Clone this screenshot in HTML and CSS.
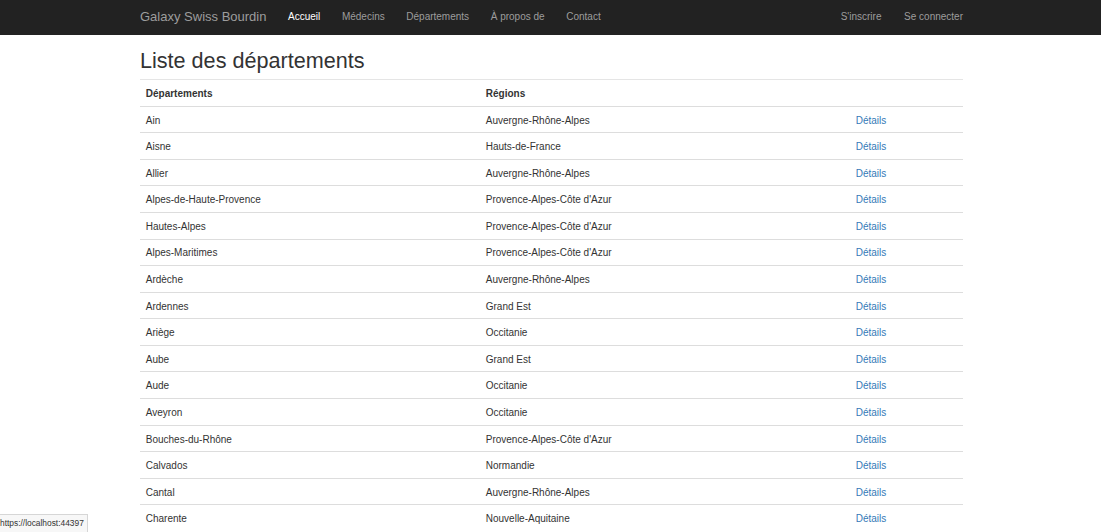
FILE: index.html
```html
<!DOCTYPE html>
<html lang="fr">
<head>
<meta charset="utf-8">
<title>Liste des départements</title>
<link rel="stylesheet" href="styles.css">
</head>
<body>
<nav class="navbar">
  <div class="container nav-inner">
    <a class="brand" href="#">Galaxy Swiss Bourdin</a>
    <ul class="nav">
      <li><a class="active" href="#">Accueil</a></li>
      <li><a href="#">Médecins</a></li>
      <li><a href="#">Départements</a></li>
      <li><a href="#">À propos de</a></li>
      <li><a href="#">Contact</a></li>
    </ul>
    <ul class="nav nav-right">
      <li><a href="#">S'inscrire</a></li>
      <li><a href="#">Se connecter</a></li>
    </ul>
  </div>
</nav>
<main class="container">
  <h2 class="title">Liste des départements</h2>
  <table class="table">
    <colgroup><col class="c1"><col class="c2"><col class="c3"></colgroup>
    <thead>
      <tr><th>Départements</th><th>Régions</th><th></th></tr>
    </thead>
    <tbody>
      <tr><td>Ain</td><td>Auvergne-Rhône-Alpes</td><td><a href="#">Détails</a></td></tr>
      <tr><td>Aisne</td><td>Hauts-de-France</td><td><a href="#">Détails</a></td></tr>
      <tr><td>Allier</td><td>Auvergne-Rhône-Alpes</td><td><a href="#">Détails</a></td></tr>
      <tr><td>Alpes-de-Haute-Provence</td><td>Provence-Alpes-Côte d'Azur</td><td><a href="#">Détails</a></td></tr>
      <tr><td>Hautes-Alpes</td><td>Provence-Alpes-Côte d'Azur</td><td><a href="#">Détails</a></td></tr>
      <tr><td>Alpes-Maritimes</td><td>Provence-Alpes-Côte d'Azur</td><td><a href="#">Détails</a></td></tr>
      <tr><td>Ardèche</td><td>Auvergne-Rhône-Alpes</td><td><a href="#">Détails</a></td></tr>
      <tr><td>Ardennes</td><td>Grand Est</td><td><a href="#">Détails</a></td></tr>
      <tr><td>Ariège</td><td>Occitanie</td><td><a href="#">Détails</a></td></tr>
      <tr><td>Aube</td><td>Grand Est</td><td><a href="#">Détails</a></td></tr>
      <tr><td>Aude</td><td>Occitanie</td><td><a href="#">Détails</a></td></tr>
      <tr><td>Aveyron</td><td>Occitanie</td><td><a href="#">Détails</a></td></tr>
      <tr><td>Bouches-du-Rhône</td><td>Provence-Alpes-Côte d'Azur</td><td><a href="#">Détails</a></td></tr>
      <tr><td>Calvados</td><td>Normandie</td><td><a href="#">Détails</a></td></tr>
      <tr><td>Cantal</td><td>Auvergne-Rhône-Alpes</td><td><a href="#">Détails</a></td></tr>
      <tr><td>Charente</td><td>Nouvelle-Aquitaine</td><td><a href="#">Détails</a></td></tr>
    </tbody>
  </table>
</main>
<div class="statusbar">https://localhost:44397</div>
</body>
</html>
```
FILE: styles.css
```css
html, body {
  margin: 0;
  padding: 0;
  height: 100%;
  overflow: hidden;
}
body {
  font-family: "Liberation Sans", Arial, Helvetica, sans-serif;
  font-size: 10px;
  color: #333;
  background: #fff;
}
a { text-decoration: none; }

.container {
  width: 823px;
  margin-left: 140px;
}

.navbar {
  background: #222;
  height: 35px;
}
.nav-inner {
  display: flex;
  align-items: center;
  height: 35px;
}
.brand {
  font-size: 13px;
  color: #9d9d9d;
  padding-right: 10.8px;
  line-height: 14.4px;
  padding-bottom: 1px;
}
.nav {
  list-style: none;
  margin: 0;
  padding: 0;
  display: flex;
}
.nav a {
  display: block;
  padding: 0 10.8px 1.5px;
  line-height: 14.4px;
  color: #9d9d9d;
}
.nav a.active { color: #fff; }
.nav-right {
  margin-left: auto;
  margin-right: -10.8px;
}
.nav-right li:first-child a { padding-right: 11.8px; }

.title {
  font-size: 21.6px;
  font-weight: 500;
  line-height: 23.76px;
  margin: 13.6px 0 0;
  color: #333;
}

.table {
  width: 100%;
  border-collapse: separate;
  border-spacing: 0;
  margin-top: 6.4px;
  table-layout: fixed;
}
.c1 { width: 340px; }
.c2 { width: 370px; }
.table th {
  text-align: left;
  font-weight: bold;
  padding: 7px 5.76px 4.52px;
  line-height: 14.4px;
  border-top: 1px solid #e5e5e5;
  border-bottom: 1px solid #ddd;
}
.table td {
  padding: 6.9px 5.76px 4.62px;
  line-height: 14.08px;
  border-top: 1px solid #ddd;
  white-space: nowrap;
}
.table tbody tr:first-child td { border-top: 0; }
.table td a { color: #337ab7; }

.statusbar {
  position: fixed;
  left: 0;
  bottom: 0;
  top: 514px;
  padding: 0 3px 0 0;
  font-family: "Liberation Sans", sans-serif;
  font-size: 8.4px;
  line-height: 17px;
  color: #333;
  background: #f7f7f7;
  border-top: 1px solid #d6d6d6;
  border-right: 1px solid #d6d6d6;
  white-space: nowrap;
}
```
